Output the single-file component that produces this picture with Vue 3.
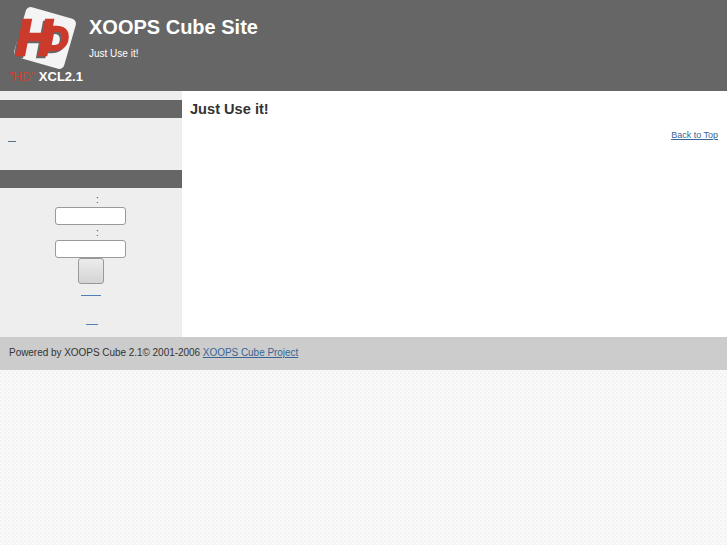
<script setup>
const siteName = 'XOOPS Cube Site'
const slogan = 'Just Use it!'
</script>

<template>
  <div class="page">
    <header class="header">
      <div class="logo">
        <svg class="logo-mark" width="70" height="68" viewBox="0 0 70 68">
          <rect x="10" y="9" width="52" height="52" rx="5" fill="#f4f4f4" transform="rotate(16 36 35)" />
          <text x="7" y="52" class="logo-text"><tspan class="logo-h">H</tspan><tspan class="logo-d" dx="-8" dy="-5">D</tspan></text>
        </svg>
        <div class="logo-label"><span class="logo-red">"HD"</span>XCL2.1</div>
      </div>
      <div class="brand">
        <h1 class="site-name">{{ siteName }}</h1>
        <p class="slogan">{{ slogan }}</p>
      </div>
    </header>

    <div class="columns">
      <aside class="sidebar">
        <div class="block-title"></div>
        <div class="block-menu"><a class="blank-link short" href="#"></a></div>
        <div class="block-title"></div>
        <form class="login" @submit.prevent>
          <span class="colon first">:</span>
          <input class="field" type="text" />
          <span class="colon">:</span>
          <input class="field" type="password" />
          <button class="submit" type="submit"></button>
          <a class="blank-link lost" href="#"></a>
          <a class="blank-link reg" href="#"></a>
        </form>
      </aside>
      <main class="content">
        <h2 class="headline">Just Use it!</h2>
        <div class="back"><a href="#">Back to Top</a></div>
      </main>
    </div>

    <footer class="footer">
      Powered by XOOPS Cube 2.1© 2001-2006 <a href="#">XOOPS Cube Project</a>
    </footer>
  </div>
</template>

<style>
html, body { margin: 0; }
body {
  background-color: #fbfbfb;
  background-image:
    radial-gradient(circle at 1px 1px, #f1f1f1 1px, transparent 1px),
    radial-gradient(circle at 3px 3px, #f4f4f4 1px, transparent 1px);
  background-size: 4px 4px;
}
</style>

<style scoped>
.page {
  font-family: "Liberation Sans", Arial, sans-serif;
  color: #333;
}
.header {
  height: 91px;
  background: #666;
  display: flex;
  color: #fff;
}
.logo {
  width: 89px;
  flex: none;
  display: flex;
  flex-direction: column;
  padding: 3px 0 0 9px;
  box-sizing: border-box;
}
.logo-mark { display: block; }
.logo-text {
  font-family: "Liberation Sans", Arial, sans-serif;
  font-style: italic;
  font-weight: bold;
  fill: #cc3a2c;
  stroke: #cc3a2c;
  stroke-width: 2.4px;
  filter: drop-shadow(-2px 2px 0 #666);
}
.logo-h { font-size: 50px; }
.logo-d { font-size: 34px; }
.logo-label {
  font-size: 13px;
  font-weight: bold;
  line-height: 12px;
  white-space: nowrap;
}
.logo-red { color: #d0402f; margin-right: 4px; font-weight: normal; font-size: 12px; }
.brand { padding-top: 15px; }
.site-name {
  margin: 0;
  font-size: 20px;
  line-height: 24px;
  font-weight: bold;
}
.slogan {
  margin: 9px 0 0;
  font-size: 10px;
  line-height: 12px;
}
.columns {
  display: flex;
  height: 246px;
  background: #fff;
}
.sidebar {
  width: 182px;
  flex: none;
  padding-top: 9px;
  box-sizing: border-box;
  background: #eee;
}
.block-title {
  height: 18px;
  background: #666;
}
.block-menu {
  height: 52px;
  padding-left: 8px;
  box-sizing: border-box;
}
.blank-link {
  display: block;
  height: 1px;
  background: #4f7fb5;
}
.short { width: 8px; position: relative; top: 23px; background: #5a7288; }
.login {
  display: flex;
  flex-direction: column;
  align-items: center;
  padding-right: 1px;
}
.colon {
  font-size: 10px;
  line-height: 11px;
  height: 11px;
  margin: 2px 0 2px 14px;
  color: #444;
}
.colon.first { margin-top: 6px; }
.field {
  width: 71px;
  height: 18px;
  box-sizing: border-box;
  padding: 0;
  background: #fff;
  border: 1px solid #999;
  border-radius: 3px;
}
.submit {
  width: 26px;
  height: 26px;
  margin-top: 0;
  padding: 0;
  border: 1px solid #999;
  border-radius: 3px;
  background: linear-gradient(#ececec, #d4d4d4);
}
.lost { width: 20px; margin: 11px 0 0; }
.reg { width: 12px; margin: 28px 0 0 2px; }
.content {
  flex: 1;
  padding: 9px 9px 0 8px;
}
.headline {
  margin: 0;
  font-size: 14.6px;
  line-height: 18px;
  font-weight: bold;
  color: #333;
}
.back {
  margin-top: 11px;
  text-align: right;
  font-size: 9px;
  line-height: 12px;
}
.back a, .footer a { color: #3a6595; text-decoration: underline; }
.footer {
  height: 33px;
  box-sizing: border-box;
  padding-left: 9px;
  background: #ccc;
  font-size: 10px;
  letter-spacing: -0.04px;
  line-height: 31px;
  color: #333;
}
</style>
